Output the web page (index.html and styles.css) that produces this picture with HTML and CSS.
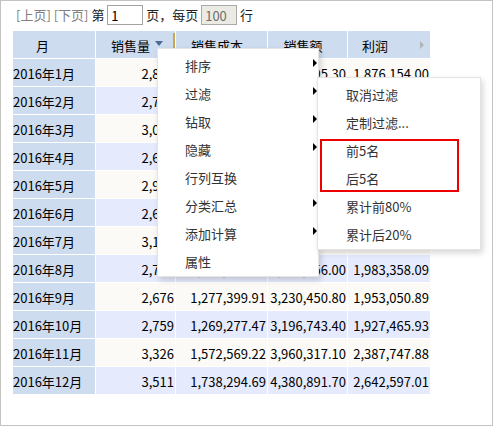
FILE: index.html
```html
<!DOCTYPE html>
<html lang="zh-CN">
<head>
<meta charset="utf-8">
<title>报表</title>
<link rel="stylesheet" href="styles.css">
</head>
<body>
<div class="frame">
  <div class="pager">
    <a class="pager-link">[上页]</a> <a class="pager-link">[下页]</a> 第 <input class="pager-input" type="text" value="1"> 页，每页 <input class="pager-input pager-input-disabled" type="text" value="100" disabled> 行
  </div>

  <div class="grid">
    <div class="hd hd-month">月</div>
    <div class="hd hd-qty">销售量<span class="sort-tri"></span><span class="resize-handle"></span></div>
    <div class="hd hd-cost">销售成本</div>
    <div class="hd hd-amount">销售额</div>
    <div class="hd hd-profit"><span class="hd-profit-text">利润</span><span class="scroll-tri"></span></div>

    <div class="rowhd">2016年1月</div><div class="c odd">2,834</div><div class="c odd">1,361,229.45</div><div class="c odd">3,262,195.30</div><div class="c odd">1,876,154.00</div>
    <div class="rowhd">2016年2月</div><div class="c even">2,712</div><div class="c even">1,298,440.10</div><div class="c even">3,180,335.60</div><div class="c even">1,881,895.50</div>
    <div class="rowhd">2016年3月</div><div class="c odd">3,045</div><div class="c odd">1,452,118.72</div><div class="c odd">3,640,227.90</div><div class="c odd">2,188,109.18</div>
    <div class="rowhd">2016年4月</div><div class="c even">2,688</div><div class="c even">1,281,906.33</div><div class="c even">3,205,771.20</div><div class="c even">1,923,864.87</div>
    <div class="rowhd">2016年5月</div><div class="c odd">2,913</div><div class="c odd">1,392,507.64</div><div class="c odd">3,488,912.40</div><div class="c odd">2,096,404.76</div>
    <div class="rowhd">2016年6月</div><div class="c even">2,641</div><div class="c even">1,266,830.25</div><div class="c even">3,151,080.50</div><div class="c even">1,884,250.25</div>
    <div class="rowhd">2016年7月</div><div class="c odd">3,152</div><div class="c odd">1,504,377.81</div><div class="c odd">3,782,490.00</div><div class="c odd">2,278,112.19</div>
    <div class="rowhd">2016年8月</div><div class="c even">2,785</div><div class="c even">1,331,597.91</div><div class="c even">3,314,956.00</div><div class="c even">1,983,358.09</div>
    <div class="rowhd">2016年9月</div><div class="c odd">2,676</div><div class="c odd">1,277,399.91</div><div class="c odd">3,230,450.80</div><div class="c odd">1,953,050.89</div>
    <div class="rowhd">2016年10月</div><div class="c even">2,759</div><div class="c even">1,269,277.47</div><div class="c even">3,196,743.40</div><div class="c even">1,927,465.93</div>
    <div class="rowhd">2016年11月</div><div class="c odd">3,326</div><div class="c odd">1,572,569.22</div><div class="c odd">3,960,317.10</div><div class="c odd">2,387,747.88</div>
    <div class="rowhd">2016年12月</div><div class="c even">3,511</div><div class="c even">1,738,294.69</div><div class="c even">4,380,891.70</div><div class="c even">2,642,597.01</div>
  </div>

  <div class="menu menu-main">
    <div class="menu-item">排序<span class="sub-arrow"></span></div>
    <div class="menu-item">过滤<span class="sub-arrow"></span></div>
    <div class="menu-item">钻取<span class="sub-arrow"></span></div>
    <div class="menu-item">隐藏<span class="sub-arrow"></span></div>
    <div class="menu-item">行列互换</div>
    <div class="menu-item">分类汇总<span class="sub-arrow"></span></div>
    <div class="menu-item">添加计算<span class="sub-arrow"></span></div>
    <div class="menu-item">属性</div>
  </div>

  <div class="menu menu-sub">
    <div class="menu-item">取消过滤</div>
    <div class="menu-item">定制过滤...</div>
    <div class="menu-item">前5名</div>
    <div class="menu-item">后5名</div>
    <div class="menu-item">累计前80%</div>
    <div class="menu-item">累计后20%</div>
  </div>

  <div class="highlight"></div>
</div>
</body>
</html>
```

FILE: styles.css
```css
html, body {
  margin: 0;
  padding: 0;
  background: #ffffff;
}

.frame {
  position: relative;
  width: 493px;
  height: 426px;
  box-sizing: border-box;
  border: 1px solid #c3c3c3;
  padding: 4px 0 0 12px;
  font-family: "Noto Sans CJK SC", "Noto Sans", sans-serif;
  font-size: 13px;
  color: #111;
  overflow: hidden;
}

/* pager */
.pager {
  height: 20px;
  line-height: 20px;
  padding-left: 3px;
  white-space: nowrap;
  color: #222;
}

.pager-link {
  color: #808080;
  text-decoration: none;
}

.pager-input {
  box-sizing: border-box;
  width: 36px;
  height: 20px;
  margin: 0;
  padding: 0 3px;
  border: 1px solid #a3a3a3;
  font-family: inherit;
  font-size: 13px;
  line-height: 18px;
  color: #000;
  background: #fff;
  vertical-align: top;
  outline: none;
}

.pager-input-disabled {
  background: #ebebe4;
  color: #6d6d6d;
  border-color: #aaaaaa;
}

/* grid */
.grid {
  display: grid;
  grid-template-columns: 82px 79px 91px 79px 82px;
  grid-auto-rows: 27px;
  gap: 1px;
  width: max-content;
  margin-top: 6px;
  background: #ffffff;
}

.hd {
  position: relative;
  display: flex;
  align-items: center;
  justify-content: center;
  padding-top: 2px;
  box-sizing: border-box;
  background: #cedcef;
  color: #000;
  white-space: nowrap;
}

.hd-month { padding-right: 23px; }
.hd-qty { padding-left: 3px; }
.hd-cost { padding-right: 9px; }
.hd-amount { padding-right: 9px; }

.hd-profit {
  justify-content: flex-end;
  padding-right: 6px;
}

.hd-profit-text {
  margin-right: 32px;
}

.sort-tri {
  width: 0;
  height: 0;
  margin-left: 5px;
  margin-bottom: 4px;
  border-top: 5px solid #4a6a94;
  border-left: 4.5px solid transparent;
  border-right: 4.5px solid transparent;
}

.scroll-tri {
  width: 0;
  height: 0;
  margin-bottom: 2px;
  border-left: 4px solid #b4b4b4;
  border-top: 4px solid transparent;
  border-bottom: 4px solid transparent;
}

.resize-handle {
  position: absolute;
  right: 0;
  top: 2px;
  bottom: 0;
  width: 2px;
  background: #c9a650;
}

.rowhd {
  display: flex;
  align-items: center;
  padding-top: 2px;
  box-sizing: border-box;
  background: #cedcef;
  color: #000;
  white-space: nowrap;
}

.c {
  display: flex;
  align-items: center;
  justify-content: flex-end;
  padding: 2px 1px 0 0;
  box-sizing: border-box;
  color: #000;
  white-space: nowrap;
}

.odd { background: #fbfaf6; }
.even { background: #e5eafc; }

/* context menus */
.menu {
  position: absolute;
  box-sizing: border-box;
  background: #ffffff;
  border: 1px solid #e4e4e4;
  box-shadow: 2px 3px 6px rgba(0, 0, 0, 0.16);
  padding-top: 2px;
  color: #333;
  font-size: 13px;
}

.menu-main {
  left: 156px;
  top: 47px;
  width: 162px;
  height: 229px;
  padding-left: 27px;
}

.menu-sub {
  left: 316px;
  top: 76px;
  width: 164px;
  height: 173px;
  padding-left: 28px;
  z-index: 2;
}

.menu-item {
  display: flex;
  align-items: center;
  height: 28px;
  padding-top: 1px;
  box-sizing: border-box;
  white-space: nowrap;
}

.sub-arrow {
  align-self: flex-start;
  width: 0;
  height: 0;
  margin-left: auto;
  margin-top: 7px;
  margin-right: 1px;
  border-left: 4px solid #000;
  border-top: 4px solid transparent;
  border-bottom: 4px solid transparent;
}

.highlight {
  position: absolute;
  left: 319px;
  top: 138px;
  width: 139px;
  height: 53px;
  box-sizing: border-box;
  border: 2px solid #ee0000;
  z-index: 3;
}
```
